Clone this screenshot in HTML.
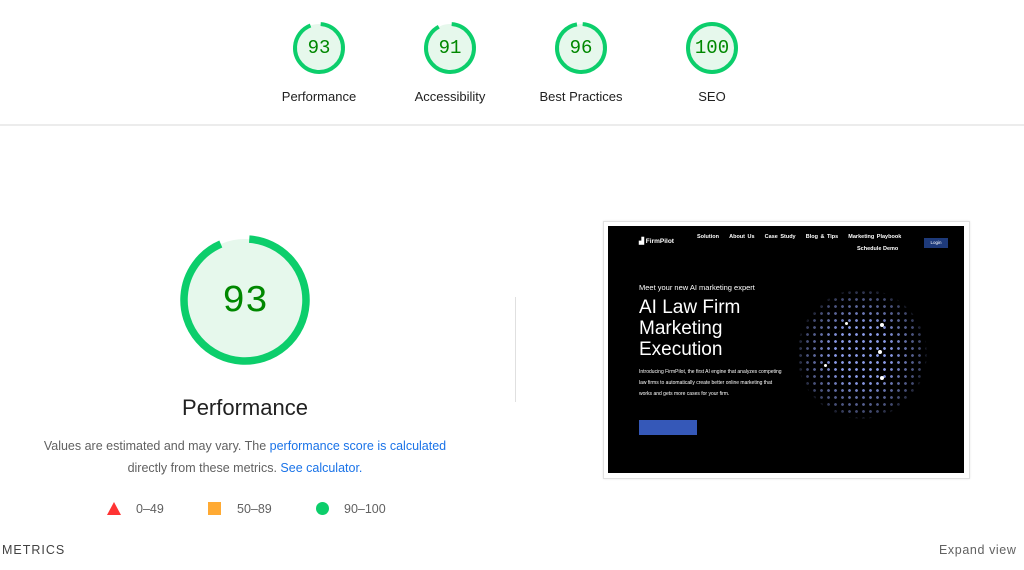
<!DOCTYPE html>
<html><head><meta charset="utf-8"><style>
*{margin:0;padding:0;box-sizing:border-box}
body{width:1024px;height:570px;overflow:hidden;background:#fff;font-family:"Liberation Sans",Arial,sans-serif;position:relative;color:#212121}
.a{position:absolute}
.g{position:absolute;width:60px;height:60px}
.g svg{position:absolute;left:0;top:0}
.g span{position:absolute;left:0;top:0;width:60px;line-height:60px;text-align:center;font-family:"Liberation Mono",monospace;font-size:19px;color:#008800}
.lbl{position:absolute;width:140px;text-align:center;font-size:13px;color:#212121;top:89px}
.topbar{position:absolute;left:0;top:124px;width:1024px;height:2px;background:#ececec}
.sc{color:#fff;font-family:"Liberation Sans",sans-serif}
</style></head><body>

<div class="g" style="left:289px;top:18px"><svg width="60" height="60"><circle cx="30" cy="30" r="24" fill="#e6f8ec" stroke="none"/><circle cx="30" cy="30" r="24" fill="none" stroke="#0cce6b" stroke-width="4" stroke-dasharray="140.2 200" transform="rotate(-86 30 30)"/></svg><span>93</span></div>
<div class="g" style="left:420px;top:18px"><svg width="60" height="60"><circle cx="30" cy="30" r="24" fill="#e6f8ec"/><circle cx="30" cy="30" r="24" fill="none" stroke="#0cce6b" stroke-width="4" stroke-dasharray="137.2 200" transform="rotate(-86 30 30)"/></svg><span>91</span></div>
<div class="g" style="left:551px;top:18px"><svg width="60" height="60"><circle cx="30" cy="30" r="24" fill="#e6f8ec"/><circle cx="30" cy="30" r="24" fill="none" stroke="#0cce6b" stroke-width="4" stroke-dasharray="144.8 200" transform="rotate(-86 30 30)"/></svg><span>96</span></div>
<div class="g" style="left:682px;top:18px"><svg width="60" height="60"><circle cx="30" cy="30" r="24" fill="#e6f8ec"/><circle cx="30" cy="30" r="24" fill="none" stroke="#0cce6b" stroke-width="4"/></svg><span>100</span></div>
<div class="lbl" style="left:249px">Performance</div>
<div class="lbl" style="left:380px">Accessibility</div>
<div class="lbl" style="left:511px">Best Practices</div>
<div class="lbl" style="left:642px">SEO</div>
<div class="topbar"></div>

<svg class="a" style="left:175px;top:230px" width="140" height="140"><circle cx="70" cy="70" r="61" fill="#e6f8ec"/><circle cx="70" cy="70" r="61" fill="none" stroke="#0cce6b" stroke-width="7.5" stroke-dasharray="354 400" transform="rotate(-86 70 70)"/></svg>
<div class="a" style="left:175px;top:280px;width:140px;text-align:center;font-family:'Liberation Mono',monospace;font-size:38px;color:#008800">93</div>
<div class="a" style="left:145px;top:395px;width:200px;text-align:center;font-size:22px;color:#212121">Performance</div>
<div class="a" style="left:0;top:435px;width:490px;text-align:center;font-size:12.5px;line-height:22px;color:#616161">Values are estimated and may vary. The <span style="color:#1a73e8">performance score is calculated</span><br>directly from these metrics. <span style="color:#1a73e8">See calculator.</span></div>
<svg class="a" style="left:107px;top:502px" width="14" height="13"><polygon points="7,0 14,13 0,13" fill="#ff3333"/></svg>
<div class="a" style="left:136px;top:502px;font-size:12.5px;color:#616161">0–49</div>
<div class="a" style="left:208px;top:502px;width:13px;height:13px;background:#ffaa33"></div>
<div class="a" style="left:237px;top:502px;font-size:12.5px;color:#616161">50–89</div>
<div class="a" style="left:316px;top:502px;width:13px;height:13px;border-radius:50%;background:#0cce6b"></div>
<div class="a" style="left:344px;top:502px;font-size:12.5px;color:#616161">90–100</div>
<div class="a" style="left:2px;top:543px;font-size:12.5px;letter-spacing:1px;color:#424242">METRICS</div>
<div class="a" style="left:939px;top:543px;font-size:12.5px;letter-spacing:.6px;color:#616161">Expand view</div>

<div class="a" style="left:515px;top:297px;width:1px;height:105px;background:#e0e0e0"></div>

<div class="a" style="left:603px;top:221px;width:367px;height:258px;border:1px solid #e0e0e0;box-shadow:0 0 2px rgba(0,0,0,.1);background:#fff"></div>
<div class="a" style="left:608px;top:226px;width:356px;height:247px;background:#000;overflow:hidden">
 <div class="a sc" style="left:31px;top:11px;font-size:6.5px;font-weight:bold">▟ FirmPilot</div>
 <div class="a sc" style="left:89px;top:8px;font-size:5.5px;font-weight:bold;word-spacing:1px;white-space:nowrap">Solution &nbsp; &nbsp;About Us &nbsp; &nbsp;Case Study &nbsp; &nbsp;Blog &amp; Tips &nbsp; &nbsp;Marketing Playbook</div>
 <div class="a sc" style="left:249px;top:20px;font-size:5.5px;font-weight:bold">Schedule Demo</div>
 <div class="a sc" style="left:316px;top:12px;width:24px;height:10px;background:#1e3a7a;font-size:4.5px;text-align:center;line-height:10px">Login</div>
 <div class="a sc" style="left:31px;top:57px;font-size:7.5px">Meet your new AI marketing expert</div>
 <div class="a sc" style="left:31px;top:71px;font-size:19px;line-height:21px">AI Law Firm<br>Marketing<br>Execution</div>
 <div class="a sc" style="left:31px;top:141px;font-size:5px;line-height:10.8px;width:145px">Introducing FirmPilot, the first AI engine that analyzes competing law firms to automatically create better online marketing that works and gets more cases for your firm.</div>
 <div class="a" style="left:31px;top:194px;width:58px;height:15px;background:#3558b8"></div>
 <div class="a" style="left:189px;top:63px;width:130px;height:130px;border-radius:50%;background:radial-gradient(circle,#8a9ae8 0 1.2px,transparent 1.6px) 0 0/7px 7px;-webkit-mask:radial-gradient(circle,#000 30%,rgba(0,0,0,.45) 65%,transparent 72%);mask:radial-gradient(circle,#000 30%,rgba(0,0,0,.45) 65%,transparent 72%)"></div>
 <div class="a" style="left:272px;top:97px;width:4px;height:4px;border-radius:50%;background:#fff"></div>
 <div class="a" style="left:237px;top:96px;width:3px;height:3px;border-radius:50%;background:#fff"></div>
 <div class="a" style="left:272px;top:150px;width:4px;height:4px;border-radius:50%;background:#fff"></div>
 <div class="a" style="left:216px;top:138px;width:3px;height:3px;border-radius:50%;background:#fff"></div>
 <div class="a" style="left:270px;top:124px;width:4px;height:4px;border-radius:50%;background:#fff"></div>
</div>
</body></html>
